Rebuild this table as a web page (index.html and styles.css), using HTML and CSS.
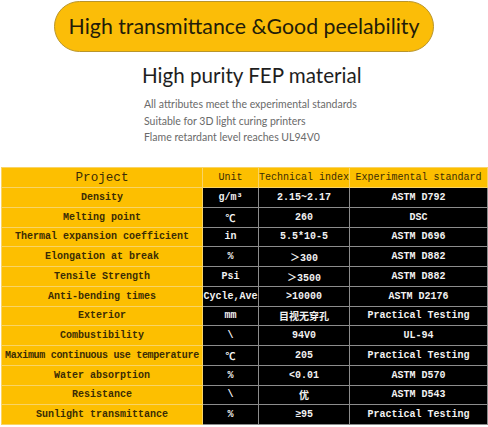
FILE: index.html
```html
<!DOCTYPE html>
<html lang="en">
<head>
    <meta charset="UTF-8">
    <meta name="viewport" content="width=device-width, initial-scale=1.0">
    <title>FEP film</title>
    <link rel="stylesheet" href="styles.css">
</head>
<body>
    <div class="page">
        <div class="banner">
            <div class="pill">High transmittance &amp;Good peelability</div>
        </div>
        <div class="intro">
            <h1>High purity FEP material</h1>
            <p>All attributes meet the experimental standards</p>
            <p>Suitable for 3D light curing printers</p>
            <p>Flame retardant level reaches UL94V0</p>
        </div>

        <table class="spec">
            <colgroup>
                <col class="c_project">
                <col class="c_unit">
                <col class="c_index">
                <col class="c_std">
            </colgroup>
            <tr class="head">
                <th class="big">Project</th>
                <th>Unit</th>
                <th>Technical index</th>
                <th>Experimental standard</th>
            </tr>
            <tr><td class="name">Density</td><td>g/m³</td><td>2.15~2.17</td><td>ASTM D792</td></tr>
            <tr><td class="name">Melting point</td><td>℃</td><td>260</td><td>DSC</td></tr>
            <tr><td class="name">Thermal expansion coefficient</td><td>in</td><td>5.5*10-5</td><td>ASTM D696</td></tr>
            <tr><td class="name">Elongation at break</td><td>%</td><td>＞300</td><td>ASTM D882</td></tr>
            <tr><td class="name">Tensile Strength</td><td>Psi</td><td>＞3500</td><td>ASTM D882</td></tr>
            <tr><td class="name">Anti-bending times</td><td>Cycle,Ave</td><td>&gt;10000</td><td>ASTM D2176</td></tr>
            <tr><td class="name">Exterior</td><td>mm</td><td>目视无穿孔</td><td>Practical Testing</td></tr>
            <tr><td class="name">Combustibility</td><td>\</td><td>94V0</td><td>UL-94</td></tr>
            <tr><td class="name tight">Maximum continuous use temperature</td><td>℃</td><td>205</td><td>Practical Testing</td></tr>
            <tr><td class="name">Water absorption</td><td>%</td><td>&lt;0.01</td><td>ASTM D570</td></tr>
            <tr><td class="name">Resistance</td><td>\</td><td>优</td><td>ASTM D543</td></tr>
            <tr><td class="name">Sunlight transmittance</td><td>%</td><td>≥95</td><td>Practical Testing</td></tr>
        </table>
    </div>
</body>
</html>
```

FILE: styles.css
```css
*{
    box-sizing: border-box;
}
body{
    margin: 0;
    padding: 0;
    background-color: #fff;
}
.page{
    width: 488px;
    height: 427px;
    overflow: hidden;
}
    .banner{
        display: flex;
        justify-content: center;
        padding-top: 1px;
    }
        .pill{
            width: 380px;
            height: 51px;
            border-radius: 26px;
            background-color: #fbbd08;
            border: 1px solid #b9952b;

            display: flex;
            justify-content: center;
            align-items: center;
            padding-bottom: 2px;
            font-family: Lato, "Noto Sans", sans-serif;
            font-size: 21.3px;
            color: #231c08;
        }
    .intro{
        padding-left: 142px;
        font-family: Lato, "Noto Sans", sans-serif;
    }
        .intro h1{
            margin: 8px 0 6px;
            font-size: 20.6px;
            font-weight: normal;
            color: #1e1e1e;
            line-height: 30px;
        }
        .intro p{
            margin: 0;
            padding-left: 2px;
            font-size: 10.5px;
            line-height: 16.7px;
            color: #6a6a6a;
        }
    .spec{
        margin: 21px 0 0 1px;
        width: 486px;
        table-layout: fixed;
        border-collapse: collapse;
        font-family: "Liberation Mono", "Noto Sans CJK SC", monospace;
        font-weight: bold;
        font-size: 10px;
    }
        .c_project{ width: 201px; }
        .c_unit{ width: 56px; }
        .c_index{ width: 91px; }
        .c_std{ width: 138px; }

        .spec th,
        .spec td{
            padding: 0;
            text-align: center;
            white-space: nowrap;
            height: 19.75px;
            background-color: #000;
            color: #f2f2f2;
            border: 1px solid #8c8c8c;
        }
        .spec .head th{
            height: 20px;
            background-color: #fdbf00;
            color: #3a2c05;
            border: 1px solid #f9d465;
            font-weight: normal;
        }
        .spec .head th.big{
            font-size: 12.6px;
        }
        .spec td.name{
            background-color: #fdbf00;
            color: #3a2c05;
            border: 1px solid #f9d465;
        }
        .spec td.tight{
            letter-spacing: -0.3px;
        }
```
